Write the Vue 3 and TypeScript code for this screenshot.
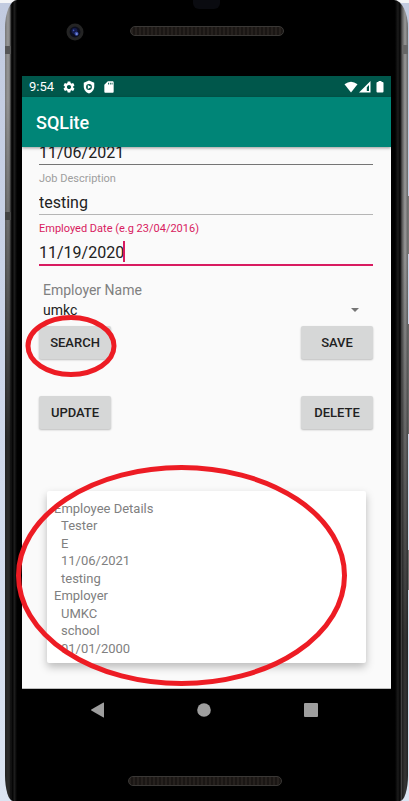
<script setup lang="ts">
import { ref } from 'vue'

const birthDate = ref('11/06/2021')
const job = ref('testing')
const employed = ref('11/19/2020')
const employer = ref('umkc')

interface Line {
  text: string
  indent: boolean
}

const details: Line[] = [
  { text: 'Employee Details', indent: false },
  { text: 'Tester', indent: true },
  { text: 'E', indent: true },
  { text: '11/06/2021', indent: true },
  { text: 'testing', indent: true },
  { text: 'Employer', indent: false },
  { text: 'UMKC', indent: true },
  { text: 'school', indent: true },
  { text: '01/01/2000', indent: true },
]
</script>

<template>
  <div class="stage">
    <div class="phone">
      <div class="top-bezel">
        <span class="sensor"></span>
        <svg class="camera" viewBox="0 0 18 18" aria-hidden="true">
          <circle cx="9" cy="9" r="8.5" fill="#242424" />
          <circle cx="9" cy="9" r="5.4" fill="#0b0d1c" />
          <circle cx="8.5" cy="8" r="3" fill="#151c4c" />
          <circle cx="10.5" cy="10.8" r="2" fill="#3a4ea8" />
          <circle cx="10.8" cy="11" r="0.8" fill="#a0b2f5" />
          <circle cx="7.6" cy="7.4" r="0.8" fill="#4054a8" />
        </svg>
        <span class="speaker"></span>
      </div>

      <div class="screen">
        <div class="status">
          <span class="time">9:54</span>
          <svg class="ico" viewBox="0 0 24 24" aria-hidden="true">
            <path fill="#fff" d="M19.14 12.94c.04-.3.06-.61.06-.94s-.02-.64-.07-.94l2.03-1.58c.18-.14.23-.41.12-.61l-1.92-3.32c-.12-.22-.37-.29-.59-.22l-2.39.96c-.5-.38-1.03-.7-1.62-.94l-.36-2.54c-.04-.24-.24-.41-.48-.41h-3.84c-.24 0-.43.17-.47.41l-.36 2.54c-.59.24-1.13.57-1.62.94l-2.39-.96c-.22-.08-.47 0-.59.22L2.74 8.87c-.12.21-.08.47.12.61l2.03 1.58c-.05.3-.09.63-.09.94s.02.64.07.94l-2.03 1.58c-.18.14-.23.41-.12.61l1.92 3.32c.12.22.37.29.59.22l2.39-.96c.5.38 1.03.7 1.62.94l.36 2.54c.05.24.24.41.48.41h3.84c.24 0 .44-.17.47-.41l.36-2.54c.59-.24 1.13-.56 1.62-.94l2.39.96c.22.08.47 0 .59-.22l1.92-3.32c.12-.22.07-.47-.12-.61l-2.01-1.58zM12 15.6c-1.98 0-3.6-1.62-3.6-3.6s1.62-3.6 3.6-3.6 3.6 1.62 3.6 3.6-1.62 3.6-3.6 3.6z" />
          </svg>
          <svg class="ico" viewBox="0 0 24 24" aria-hidden="true">
            <path fill="#fff" fill-rule="evenodd" d="M12 1 3 4.500V11c0 5.600 3.800 10.300 9 12 5.200-1.700 9-6.400 9-12V4.500zM12 7a5 5 0 1 1 0 10 5 5 0 0 1 0-10z" />
            <path fill="#fff" d="M10 8.500v7l6-3.500z" />
          </svg>
          <svg class="ico" viewBox="0 0 24 24" aria-hidden="true">
            <path fill="#fff" d="M18 2h-8L4 8v12c0 1.100.9 2 2 2h12c1.100 0 2-.9 2-2V4c0-1.100-.9-2-2-2zm-6 5.500h-1.500V4.500h1.500zm3 0h-1.500V4.500h1.500zm3 0h-1.500V4.500h1.500z" />
          </svg>
          <svg class="signals" viewBox="0 0 40 14" aria-hidden="true">
            <path fill="#fff" d="M0.500 4.300Q7 -1 13.500 4.300L7 12.500Z" />
            <path fill="#fff" fill-rule="evenodd" d="M26.500 1V12.500H15ZM25 5L22.800 7.200V11H25Z" />
            <path fill="#fff" d="M34.500 1h3v1h1q1 0 1 1v8.500q0 1-1 1h-5q-1 0-1-1V3q0-1 1-1h1z" />
          </svg>
        </div>
        <header class="appbar"><h1>SQLite</h1></header>

        <main class="content">
          <form class="form" @submit.prevent>
            <input v-model="birthDate" class="box first" type="text" aria-label="Date" />
            <label class="hint" for="job">Job Description</label>
            <input id="job" v-model="job" class="box light" type="text" />
            <label class="hint active" for="employed">Employed Date (e.g 23/04/2016)</label>
            <div class="box focused">
              <input id="employed" v-model="employed" class="date" type="text" size="10" /><span class="caret"></span>
            </div>

            <div class="spinner">
              <label for="employer">Employer Name</label>
              <div class="pick">
                <select id="employer" v-model="employer">
                  <option>umkc</option>
                </select>
                <svg class="arrow" viewBox="0 0 8 4" aria-hidden="true"><path fill="#757575" d="M0 0h8L4 4z" /></svg>
              </div>
            </div>

            <div class="row">
              <div class="marked">
                <button type="button">SEARCH</button>
                <svg class="ring small" viewBox="0 0 92 62" aria-hidden="true">
                  <ellipse cx="46" cy="31" rx="43" ry="28.500" fill="none" stroke="#ed1c24" stroke-width="5" />
                </svg>
              </div>
              <button type="button">SAVE</button>
            </div>
            <div class="row">
              <button type="button">UPDATE</button>
              <button type="button">DELETE</button>
            </div>
          </form>

          <section class="card">
            <p v-for="(line, i) in details" :key="i" :class="{ indent: line.indent }">{{ line.text }}</p>
            <svg class="ring large" viewBox="0 0 331 221" preserveAspectRatio="none" aria-hidden="true">
              <ellipse cx="165.500" cy="110.500" rx="163" ry="108" fill="none" stroke="#ed1c24" stroke-width="5" />
            </svg>
          </section>
        </main>
      </div>

      <nav class="nav">
        <button type="button" aria-label="Back">
          <svg viewBox="0 0 16 16"><path fill="#9e9e9e" d="M14 .8v14.400q0 .5-.5.300L1.300 8.500q-.6-.5 0-1L13.500.5q.5-.2.500.3z" /></svg>
        </button>
        <button type="button" aria-label="Home">
          <svg viewBox="0 0 16 16"><circle cx="8" cy="8" r="6.800" fill="#9e9e9e" /></svg>
        </button>
        <button type="button" aria-label="Overview">
          <svg viewBox="0 0 16 16"><rect x="1" y="1" width="14" height="14" rx="1" fill="#9e9e9e" /></svg>
        </button>
      </nav>
      <div class="bottom-bezel"><span class="speaker"></span></div>
    </div>
  </div>
</template>

<style>
body {
  background: #fff;
}
</style>

<style scoped>
.stage {
  box-sizing: border-box;
  min-height: 100vh;
  padding: 0 1px 0 5px;
  display: flex;
  overflow: hidden;
  background:
    linear-gradient(transparent 196px, #777 196px 254px, transparent 254px 324px, #666 324px 434px, transparent 434px 550px, #777 550px 590px, transparent 590px) right / 1px 100% no-repeat,
    linear-gradient(#f4f5f7 3px, #c2cbe0 3px, #cbd4e8 300px, #dbe4f2);
  font-family: Roboto, sans-serif;
}
.phone {
  box-sizing: border-box;
  flex: 1;
  min-width: 0;
  display: flex;
  flex-direction: column;
  padding: 0 17px;
  border-radius: 12px 14px 8px 8px / 28px 28px 26px 26px;
  background:
    linear-gradient(transparent 46px, #555 46px 54px, transparent 54px 212px, #444 212px 220px, transparent 220px) left / 6px 100% no-repeat,
    linear-gradient(transparent 45px, #666 45px 54px, transparent 54px) right / 6px 100% no-repeat,
    linear-gradient(transparent 100px, rgba(0, 0, 0, 0.72) 440px) left / 6px 100% no-repeat,
    linear-gradient(transparent 250px, rgba(0, 0, 0, 0.65) 640px) right / 6px 100% no-repeat,
    linear-gradient(90deg, #777 0, #999 3px, #777 5px, #161616 6px, #000 8px, #222 9px, #000 12px, #000 calc(100% - 13px), #1c1c1c calc(100% - 10px), #050505 calc(100% - 8px), #555 calc(100% - 6px), #999 calc(100% - 3px), #666 100%);
}
.top-bezel {
  position: relative;
  height: 76px;
  display: flex;
  justify-content: center;
  align-items: flex-start;
  padding-top: 26px;
  box-sizing: border-box;
}
.sensor {
  position: absolute;
  top: 0;
  width: 27px;
  height: 9px;
  border-radius: 0 0 6px 6px;
  background: #0a0b10;
}
.camera {
  position: absolute;
  left: 44px;
  top: 23px;
  width: 18px;
  height: 18px;
}
.speaker {
  box-sizing: border-box;
  width: 154px;
  height: 10px;
  border: 1px solid #3a3836;
  border-radius: 5px;
  background: repeating-linear-gradient(90deg, #26211e 0 2px, #1a1614 2px 4px);
}
.screen {
  background: #fafafa;
  color: #212121;
}
.status {
  height: 21px;
  box-sizing: border-box;
  padding: 0 7px;
  display: flex;
  align-items: center;
  gap: 6px;
  background: #00574b;
  color: #fff;
}
.time {
  font-size: 13px;
  margin-right: 2px;
}
.ico {
  width: 14px;
  height: 14px;
}
.signals {
  width: 40px;
  height: 14px;
  margin-left: auto;
}
.appbar {
  position: relative;
  height: 50px;
  display: flex;
  align-items: center;
  padding: 0 14px;
  background: #008577;
  box-shadow: 0 1px 3px rgba(0, 0, 0, 0.4);
  z-index: 1;
}
h1 {
  margin: 0;
  color: #fff;
  font-size: 18px;
  font-weight: 500;
}
.content {
  padding: 0 18px 25px 17px;
  border-bottom: 1px solid #bdbdbd;
}
.form {
  display: flex;
  flex-direction: column;
}
.box {
  box-sizing: border-box;
  width: 100%;
  height: 29px;
  padding: 5px 0 0;
  margin: 0 0 7px;
  border: 0;
  border-bottom: 1px solid #757575;
  border-radius: 0;
  outline: 0;
  background: transparent;
  color: #212121;
  font: 16px Roboto, sans-serif;
}
.box.first {
  margin-top: -11px;
}
.box.light {
  border-color: #b5b5b5;
}
.box.focused {
  display: flex;
  height: 30px;
  border-bottom: 2px solid #d81b60;
}
.date {
  width: 84px;
  padding: 0;
  border: 0;
  outline: 0;
  background: transparent;
  color: inherit;
  font: inherit;
}
.caret {
  width: 2px;
  height: 21px;
  background: #d81b60;
}
.hint {
  height: 14px;
  color: #9e9e9e;
  font-size: 11px;
  line-height: 14px;
}
.hint.active {
  color: #d81b60;
}
.spinner {
  padding: 7px 14px 0 4px;
  margin-bottom: 6px;
  color: #808080;
  font-size: 14px;
  line-height: 20px;
}
.spinner label {
  display: block;
}
.pick {
  display: flex;
  align-items: center;
}
select {
  flex: 1;
  height: 20px;
  padding: 0;
  border: 0;
  outline: 0;
  appearance: none;
  background: transparent;
  color: #212121;
  font: 14px Roboto, sans-serif;
}
.arrow {
  width: 8px;
  height: 4px;
}
.row {
  display: flex;
  justify-content: space-between;
  margin-bottom: 37px;
}
.row button {
  display: block;
  width: 72px;
  height: 33px;
  padding: 0;
  border: 0;
  border-radius: 2px;
  background: #d6d7d7;
  box-shadow: 0 1px 2px rgba(0, 0, 0, 0.25);
  color: #212121;
  font: 500 13px Roboto, sans-serif;
}
.marked {
  position: relative;
}
.ring {
  position: absolute;
  pointer-events: none;
}
.ring.small {
  left: -14px;
  top: -11px;
  width: 92px;
  height: 62px;
}
.card {
  position: relative;
  box-sizing: border-box;
  height: 172px;
  margin: 25px 7px 0 8px;
  padding: 9px 7px 6px;
  display: flex;
  flex-direction: column;
  border-radius: 2px;
  background: #fff;
  box-shadow: 0 4px 9px rgba(0, 0, 0, 0.26);
  color: #808080;
  font-size: 13px;
}
.card p {
  flex: 1;
  margin: 0;
  line-height: 17px;
}
.card .indent {
  padding-left: 7px;
}
.ring.large {
  left: -31px;
  top: -26px;
  width: 331px;
  height: 221px;
}
.nav {
  display: grid;
  grid-template-columns: repeat(3, 1fr);
  padding: 13px 27px 0 23px;
  justify-items: center;
}
.nav button {
  width: 16px;
  height: 16px;
  padding: 0;
  border: 0;
  background: transparent;
}
.nav svg {
  display: block;
  width: 16px;
  height: 16px;
}
.bottom-bezel {
  flex: 1;
  display: flex;
  justify-content: center;
  align-items: flex-end;
  padding: 0 4px 15px 0;
}
</style>
